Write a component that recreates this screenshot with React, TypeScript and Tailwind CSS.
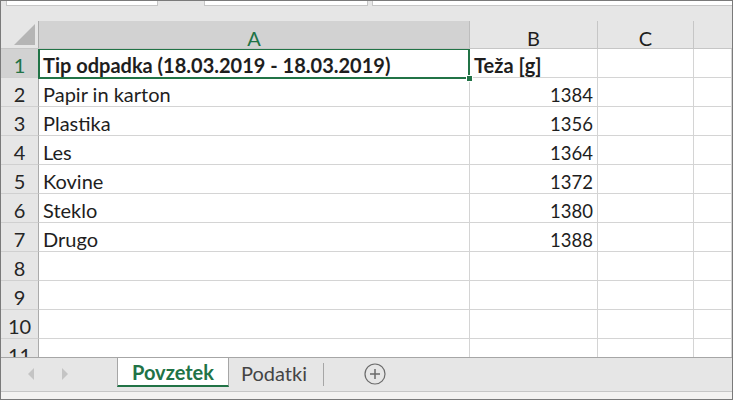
import { Fragment } from "react";

const rows: [string, string][] = [
    ["Papir in karton", "1384"],
    ["Plastika", "1356"],
    ["Les", "1364"],
    ["Kovine", "1372"],
    ["Steklo", "1380"],
    ["Drugo", "1388"],
];

function RowHead({ n, active }: { n: number; active?: boolean }) {
    return (
        <div
            className={
                "w-[38px] flex-none h-[29px] border-b border-b-[#d0d0d0] border-r border-r-[#ababab] flex items-center justify-center pt-[3px] " +
                (active ? "bg-[#d2d2d2] text-[#217346]" : "bg-[#e6e6e6] text-[#262626]")
            }
        >
            {n}
        </div>
    );
}

function Cell({ children, bold, right, w }: { children?: React.ReactNode; bold?: boolean; right?: boolean; w: string }) {
    return (
        <div
            className={
                w +
                " h-[29px] border-b border-r border-[#d4d4d4] bg-white flex items-center whitespace-nowrap overflow-hidden " +
                (right ? "justify-end pr-[4px] pt-[6px] text-[18.5px] " : "pl-[4px] pt-[3px] ") +
                (bold ? "font-bold" : "")
            }
        >
            {children}
        </div>
    );
}

function Row({ n, a, b, bold, active }: { n: number; a?: string; b?: string; bold?: boolean; active?: boolean }) {
    return (
        <div className="flex">
            <RowHead n={n} active={active} />
            <Cell w="w-[431px] flex-none" bold={bold}>{a}</Cell>
            <Cell w="w-[128px] flex-none" bold={bold} right={!bold}>{b}</Cell>
            <Cell w="w-[96px] flex-none" />
            <Cell w="flex-1" />
        </div>
    );
}

export default function App() {
    return (
        <div className="w-[733px] h-[400px] border border-[#7a7a7a] bg-[#e6e6e6] flex flex-col overflow-hidden font-['Lato',sans-serif] text-[20px] text-[#1e1e1e] leading-none">
            {/* formula bar remnants */}
            <div className="h-[20px] flex-none flex items-start">
                <div className="ml-[5px] w-[152px] h-[5px] bg-white border-x border-b border-[#c6c6c6]" />
                <div className="w-[46px] h-[5px]" />
                <div className="w-[164px] h-[5px] bg-white border-x border-b border-[#c6c6c6]" />
                <div className="ml-[4px] flex-1 h-[5px] bg-white border-l border-b border-[#c6c6c6]" />
            </div>

            {/* column headers */}
            <div className="h-[28px] flex-none flex border-b border-[#c6c6c6]">
                <div className="w-[38px] flex-none border-r border-[#ababab] flex items-end justify-end pr-[2px] pb-[2px]">
                    <svg width="22" height="22" viewBox="0 0 22 22">
                        <polygon points="21,0 21,21 0,21" fill="#b5b5b5" />
                    </svg>
                </div>
                <div className="w-[431px] flex-none bg-[#d2d2d2] border-r border-[#bdbdbd] flex items-center justify-center pt-[6px] text-[#217346]">A</div>
                <div className="w-[128px] flex-none border-r border-[#c6c6c6] flex items-center justify-center pt-[6px]">B</div>
                <div className="w-[96px] flex-none border-r border-[#c6c6c6] flex items-center justify-center pt-[6px]">C</div>
                <div className="flex-1" />
            </div>

            {/* grid */}
            <div className="relative h-[308px] flex-none overflow-hidden bg-white">
                <Row n={1} a="Tip odpadka (18.03.2019 - 18.03.2019)" b="Teža [g]" bold active />
                {rows.map(([a, b], i) => (
                    <Fragment key={a}>
                        <Row n={i + 2} a={a} b={b} />
                    </Fragment>
                ))}
                {[8, 9, 10, 11].map((n) => (
                    <Row key={n} n={n} />
                ))}
                {/* selection */}
                <div className="absolute left-[37px] top-[-1px] w-[432px] h-[31px] border-2 border-[#217346] pointer-events-none" />
                <div className="absolute left-[465px] top-[26px] w-[7px] h-[7px] bg-[#217346] border border-white" />
            </div>

            {/* sheet tabs */}
            <div className="h-[34px] flex-none flex items-start border-t border-[#a6a6a6] text-[#444]">
                <div className="w-[116px] flex-none h-full flex items-center pl-[26px] gap-[26px] pb-[2px]">
                    <svg width="8" height="12" viewBox="0 0 8 12">
                        <polygon points="7,0 7,12 1,6" fill="#c4c4c4" />
                    </svg>
                    <svg width="8" height="12" viewBox="0 0 8 12">
                        <polygon points="1,0 1,12 7,6" fill="#c4c4c4" />
                    </svg>
                </div>
                <div className="w-[112px] h-[29px] flex-none bg-white border-x border-[#a6a6a6] border-b-2 border-b-[#217346] flex items-center justify-center font-bold text-[#217346] pt-[1px]">
                    Povzetek
                </div>
                <div className="ml-[12px] h-[29px] flex items-center pt-[1px] text-[#444]">Podatki</div>
                <div className="ml-[16px] mt-[5px] w-px h-[23px] bg-[#a6a6a6]" />
                <div className="ml-[40px] h-[29px] flex items-center pt-[2px]">
                    <svg width="22" height="22" viewBox="0 0 22 22">
                        <circle cx="11" cy="11" r="10" fill="none" stroke="#6b6b6b" strokeWidth="1.2" />
                        <path d="M11 6v10M6 11h10" stroke="#6b6b6b" strokeWidth="1.5" />
                    </svg>
                </div>
            </div>
            <div className="h-[8px] flex-none border-t border-[#c6c6c6] bg-[#f3f2f1]" />
        </div>
    );
}
